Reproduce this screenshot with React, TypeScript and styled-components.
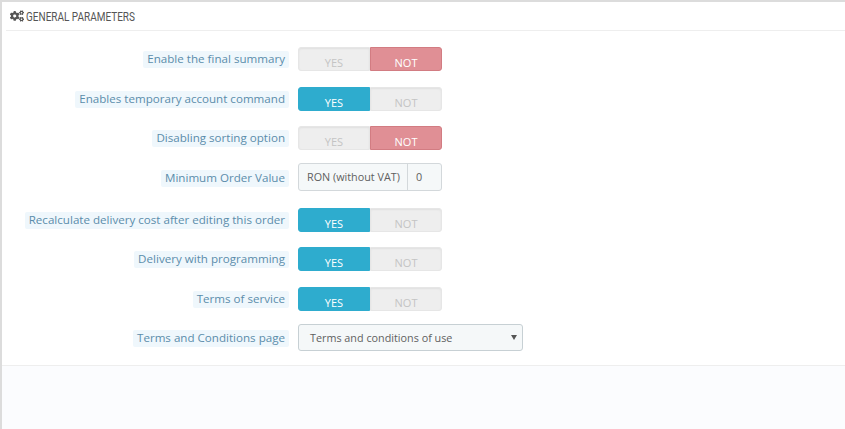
import styled, { createGlobalStyle } from 'styled-components';
import { FaCogs } from 'react-icons/fa';

const GlobalStyle = createGlobalStyle`
  html, body {
    margin: 0;
    background: #fff;
  }
  body {
    font-family: "Open Sans", "Liberation Sans", sans-serif;
    font-size: 10.8px;
    color: #5f5f5f;
  }
`;

const Panel = styled.section`
  box-sizing: border-box;
  width: 845px;
  height: 429px;
  display: flex;
  flex-direction: column;
  background: #fff;
  border-left: 2px solid #dcdcdc;
  border-top: 2px solid #dcdcdc;
  overflow: hidden;
`;

const PanelHeader = styled.header`
  box-sizing: border-box;
  height: 29px;
  margin-left: 4px;
  padding-left: 4px;
  display: flex;
  align-items: center;
  gap: 2px;
  border-bottom: 1px solid #eeeeee;
  color: #555;
`;

const HeaderTitle = styled.h3`
  margin: 0;
  font-family: "Roboto", sans-serif;
  font-size: 12.5px;
  font-weight: 400;
  text-transform: uppercase;
  white-space: nowrap;
  transform: scaleX(0.8);
  transform-origin: left center;
`;

const Form = styled.div`
  box-sizing: border-box;
  height: 335px;
  display: flex;
  flex-direction: column;
  border-bottom: 1px solid #eeeeee;
`;

// the rows in the reference are not evenly spaced, so each one sets its own gap
const Row = styled.div<{ $gap: number }>`
  margin-top: ${p => p.$gap}px;
  display: grid;
  grid-template-columns: 287px auto;
  column-gap: 9px;
  align-items: center;
  justify-content: start;
`;

const LabelCell = styled.div`
  display: flex;
  justify-content: flex-end;
`;

const Label = styled.label`
  padding: 0 4px;
  height: 17px;
  line-height: 16px;
  border-radius: 2px;
  background: #eff7fc;
  color: #5b8dab;
  font-size: 11.6px;
  white-space: nowrap;
`;

const Switch = styled.div`
  display: flex;
  width: 144px;
  height: 24px;
`;

const SwitchSide = styled.span<{ $state: 'off' | 'yes' | 'not'; $side: 'left' | 'right' }>`
  box-sizing: border-box;
  flex: 1;
  padding-top: 6px;
  line-height: 18px;
  text-align: center;
  font-size: 11px;
  border-radius: ${p => (p.$side === 'left' ? '3px 0 0 3px' : '0 3px 3px 0')};
  background: ${p => (p.$state === 'yes' ? '#2eacce' : p.$state === 'not' ? '#e08f95' : '#eeeeee')};
  color: ${p => (p.$state === 'off' ? '#c4c4c4' : '#fff')};
  border: 1px solid ${p => (p.$state === 'yes' ? '#2eacce' : p.$state === 'not' ? '#d27c82' : '#e6e6e6')};
  box-shadow: ${p => (p.$state === 'off' ? 'inset 0 1px 2px rgba(0, 0, 0, 0.06)' : 'none')};
`;

const InputGroup = styled.div`
  box-sizing: border-box;
  display: flex;
  width: 144px;
  height: 28px;
  margin-bottom: 2px;
  border: 1px solid #d3d8db;
  border-radius: 3px;
  background: #f5f8f9;
  line-height: 26px;
`;

const Addon = styled.span`
  box-sizing: border-box;
  width: 109px;
  padding-left: 8px;
  border-right: 1px solid #d3d8db;
  white-space: nowrap;
`;

const InputValue = styled.span`
  padding-left: 8px;
`;

const Select = styled.div`
  box-sizing: border-box;
  position: relative;
  width: 225px;
  height: 27px;
  margin-bottom: 1px;
  padding-left: 11px;
  border: 1px solid #c7d0d4;
  border-radius: 3px;
  background: #f5f8f9;
  line-height: 26px;
`;

const Caret = styled.svg`
  position: absolute;
  right: 5px;
  top: 9.5px;
  width: 6px;
  height: 5px;
  fill: #555;
`;

const PanelFooter = styled.footer`
  flex: 1;
  background: #fbfcfe;
`;

type SwitchValue = 'yes' | 'not';

const ToggleSwitch = ({ value }: { value: SwitchValue }) => (
  <Switch>
    <SwitchSide $side="left" $state={value === 'yes' ? 'yes' : 'off'}>YES</SwitchSide>
    <SwitchSide $side="right" $state={value === 'not' ? 'not' : 'off'}>NOT</SwitchSide>
  </Switch>
);

const Field = ({ label, gap, children }: { label: string; gap: number; children: React.ReactNode }) => (
  <Row $gap={gap}>
    <LabelCell>
      <Label>{label}</Label>
    </LabelCell>
    {children}
  </Row>
);

export default function App() {
  return (
    <>
      <GlobalStyle />
      <Panel>
        <PanelHeader>
          <FaCogs size={14} color="#555" />
          <HeaderTitle>General parameters</HeaderTitle>
        </PanelHeader>
        <Form>
          <Field gap={16} label="Enable the final summary"><ToggleSwitch value="not" /></Field>
          <Field gap={16} label="Enables temporary account command"><ToggleSwitch value="yes" /></Field>
          <Field gap={15} label="Disabling sorting option"><ToggleSwitch value="not" /></Field>
          <Field gap={13} label="Minimum Order Value">
            <InputGroup>
              <Addon>RON (without VAT)</Addon>
              <InputValue>0</InputValue>
            </InputGroup>
          </Field>
          <Field gap={15} label="Recalculate delivery cost after editing this order"><ToggleSwitch value="yes" /></Field>
          <Field gap={15} label="Delivery with programming"><ToggleSwitch value="yes" /></Field>
          <Field gap={16} label="Terms of service"><ToggleSwitch value="yes" /></Field>
          <Field gap={13} label="Terms and Conditions page">
            <Select>
              Terms and conditions of use
              <Caret viewBox="0 0 6 5"><path d="M0 0h6L3 5z" /></Caret>
            </Select>
          </Field>
        </Form>
        <PanelFooter />
      </Panel>
    </>
  );
}
